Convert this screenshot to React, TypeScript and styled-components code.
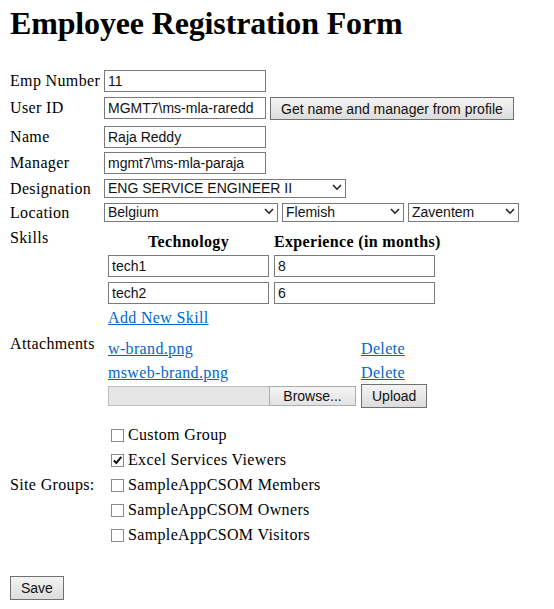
import React from "react";
import styled, { createGlobalStyle } from "styled-components";

const GlobalStyle = createGlobalStyle`
  html, body { margin: 0; padding: 0; background: #fff; }
  body {
    font-family: "Liberation Serif", "Times New Roman", serif;
    font-size: 16px;
    color: #000;
  }
`;

const sans = `"Liberation Sans", Arial, sans-serif`;

const Page = styled.div`
  padding: 5px 10px 0;
`;

const Title = styled.h1`
  margin: 0;
  font-size: 32px;
  line-height: 37px;
  font-weight: bold;
  letter-spacing: -0.15px;
`;

const Form = styled.form`
  margin: 28px 0 0;
  display: flex;
  flex-direction: column;
`;

const Row = styled.div<{ $mt: number; $center?: boolean }>`
  display: flex;
  align-items: ${(p) => (p.$center ? "center" : "flex-start")};
  margin-top: ${(p) => p.$mt}px;
`;

const Label = styled.div<{ $pt?: number }>`
  width: 94px;
  flex: none;
  padding-top: ${(p) => p.$pt ?? 0}px;
  line-height: 18px;
  letter-spacing: 0.35px;
  white-space: nowrap;
`;

const Cell = styled.div<{ $pt?: number; $pl?: number }>`
  display: flex;
  align-items: flex-start;
  gap: 4px;
  padding-top: ${(p) => p.$pt ?? 0}px;
  padding-left: ${(p) => p.$pl ?? 0}px;
`;

const TextInput = styled.input<{ $w?: number }>`
  box-sizing: border-box;
  width: ${(p) => p.$w ?? 162}px;
  height: 22px;
  margin: 0;
  padding: 0 3px;
  border: 1px solid #7a7a7a;
  border-radius: 0;
  background: #fff;
  font-family: ${sans};
  font-size: 14px;
  color: #111;
  outline: none;
`;

const Button = styled.button<{ $h?: number }>`
  box-sizing: border-box;
  height: ${(p) => p.$h ?? 23}px;
  margin: 0;
  padding: 0 10px;
  border: 1px solid #707070;
  border-radius: 0;
  background: linear-gradient(#f4f4f4, #dcdcdc);
  font-family: ${sans};
  font-size: 14px;
  color: #111;
  white-space: nowrap;
  flex: none;
`;

const SelectWrap = styled.div<{ $w: number }>`
  position: relative;
  width: ${(p) => p.$w}px;
  height: 19px;
  flex: none;
`;

const NativeSelect = styled.select`
  appearance: none;
  -webkit-appearance: none;
  box-sizing: border-box;
  width: 100%;
  height: 100%;
  margin: 0;
  padding: 0 18px 1px 3px;
  border: 1px solid #7a7a7a;
  border-radius: 0;
  background: #fff;
  font-family: ${sans};
  font-size: 14px;
  color: #111;
  outline: none;
`;

const Chevron = styled.svg`
  position: absolute;
  right: 4px;
  top: 5px;
  width: 10px;
  height: 7px;
  pointer-events: none;
`;

const SkillGrid = styled.div`
  display: grid;
  grid-template-columns: 161px 161px;
  column-gap: 5px;
  row-gap: 5px;
`;

const HeadCell = styled.div<{ $align: "center" | "left" }>`
  font-weight: bold;
  line-height: 17px;
  letter-spacing: 0.35px;
  white-space: nowrap;
  text-align: ${(p) => p.$align};
`;

const Stack = styled.div`
  display: flex;
  flex-direction: column;
`;

const Link = styled.a<{ $mt?: number }>`
  color: #0066cc;
  text-decoration: underline;
  line-height: 18px;
  letter-spacing: 0.35px;
  white-space: nowrap;
  margin-top: ${(p) => p.$mt ?? 0}px;
  align-self: flex-start;
`;

const AttachLink = styled(Link)`
  align-self: center;
`;

const AttachGrid = styled.div`
  display: grid;
  grid-template-columns: 253px auto;
  grid-auto-rows: 24px;
  align-items: center;
  justify-items: start;
`;

const FileBox = styled.div`
  display: flex;
  height: 20px;
`;

const FileField = styled.div`
  box-sizing: border-box;
  width: 161px;
  height: 20px;
  background: #e6e6e6;
  border: 1px solid #bdbdbd;
  border-right: none;
`;

const BrowseButton = styled.button`
  box-sizing: border-box;
  width: 87px;
  height: 20px;
  margin: 0;
  padding: 0;
  border: 1px solid #adadad;
  border-radius: 0;
  background: linear-gradient(#f4f4f4, #e2e2e2);
  font-family: ${sans};
  font-size: 14px;
  color: #111;
`;

const CheckList = styled.div`
  display: flex;
  flex-direction: column;
  gap: 7px;
  padding-left: 4px;
`;

const CheckItem = styled.label`
  display: flex;
  align-items: flex-start;
  line-height: 18px;
  letter-spacing: 0.35px;
  white-space: nowrap;
`;

const Box = styled.span`
  box-sizing: border-box;
  width: 13px;
  height: 13px;
  margin: 3px 4px 0 3px;
  border: 1px solid #8a8a8a;
  background: #fff;
  display: flex;
  align-items: center;
  justify-content: center;
  flex: none;
`;

const SaveRow = styled.div`
  margin-top: 32px;
  display: flex;
`;

function Select({ w, value }: { w: number; value: string }) {
  return (
    <SelectWrap $w={w}>
      <NativeSelect defaultValue={value}>
        <option value={value}>{value}</option>
      </NativeSelect>
      <Chevron viewBox="0 0 10 7">
        <polyline points="1,1 5,5.2 9,1" fill="none" stroke="#222" strokeWidth="1.6" />
      </Chevron>
    </SelectWrap>
  );
}

function Check({ label, checked }: { label: string; checked?: boolean }) {
  return (
    <CheckItem>
      <Box>
        {checked && (
          <svg width="11" height="11" viewBox="0 0 11 11">
            <polyline points="1.8,5.4 4.3,8 9.3,1.8" fill="none" stroke="#111" strokeWidth="2" />
          </svg>
        )}
      </Box>
      {label}
    </CheckItem>
  );
}

export default function App() {
  return (
    <>
      <GlobalStyle />
      <Page>
        <Title>Employee Registration Form</Title>
        <Form onSubmit={(e) => e.preventDefault()}>
          <Row $mt={0}>
            <Label $pt={2}>Emp Number</Label>
            <Cell>
              <TextInput defaultValue="11" />
            </Cell>
          </Row>
          <Row $mt={5}>
            <Label $pt={2}>User ID</Label>
            <Cell>
              <TextInput defaultValue="MGMT7\ms-mla-raredd" />
              <Button type="button">Get name and manager from profile</Button>
            </Cell>
          </Row>
          <Row $mt={6}>
            <Label $pt={2}>Name</Label>
            <Cell>
              <TextInput defaultValue="Raja Reddy" />
            </Cell>
          </Row>
          <Row $mt={4}>
            <Label $pt={2}>Manager</Label>
            <Cell>
              <TextInput defaultValue="mgmt7\ms-mla-paraja" />
            </Cell>
          </Row>
          <Row $mt={5}>
            <Label $pt={1}>Designation</Label>
            <Cell>
              <Select w={242} value="ENG SERVICE ENGINEER II" />
            </Cell>
          </Row>
          <Row $mt={5}>
            <Label $pt={1}>Location</Label>
            <Cell>
              <Select w={174} value="Belgium" />
              <Select w={122} value="Flemish" />
              <Select w={111} value="Zaventem" />
            </Cell>
          </Row>
          <Row $mt={5}>
            <Label $pt={2}>Skills</Label>
            <Cell $pt={6} $pl={4}>
              <Stack>
                <SkillGrid>
                  <HeadCell $align="center">Technology</HeadCell>
                  <HeadCell $align="left">Experience (in months)</HeadCell>
                  <TextInput $w={161} defaultValue="tech1" />
                  <TextInput $w={161} defaultValue="8" />
                  <TextInput $w={161} defaultValue="tech2" />
                  <TextInput $w={161} defaultValue="6" />
                </SkillGrid>
                <Link href="#" $mt={5}>Add New Skill</Link>
              </Stack>
            </Cell>
          </Row>
          <Row $mt={8}>
            <Label>Attachments</Label>
            <Cell $pt={1} $pl={4}>
              <AttachGrid>
                <AttachLink href="#" $mt={2}>w-brand.png</AttachLink>
                <AttachLink href="#" $mt={2}>Delete</AttachLink>
                <AttachLink href="#" $mt={2}>msweb-brand.png</AttachLink>
                <AttachLink href="#" $mt={2}>Delete</AttachLink>
                <FileBox>
                  <FileField />
                  <BrowseButton type="button">Browse...</BrowseButton>
                </FileBox>
                <Button type="button" $h={24}>Upload</Button>
              </AttachGrid>
            </Cell>
          </Row>
          <Row $mt={18} $center>
            <Label>Site Groups:</Label>
            <CheckList>
              <Check label="Custom Group" />
              <Check label="Excel Services Viewers" checked />
              <Check label="SampleAppCSOM Members" />
              <Check label="SampleAppCSOM Owners" />
              <Check label="SampleAppCSOM Visitors" />
            </CheckList>
          </Row>
          <SaveRow>
            <Button type="submit" $h={24}>Save</Button>
          </SaveRow>
        </Form>
      </Page>
    </>
  );
}
